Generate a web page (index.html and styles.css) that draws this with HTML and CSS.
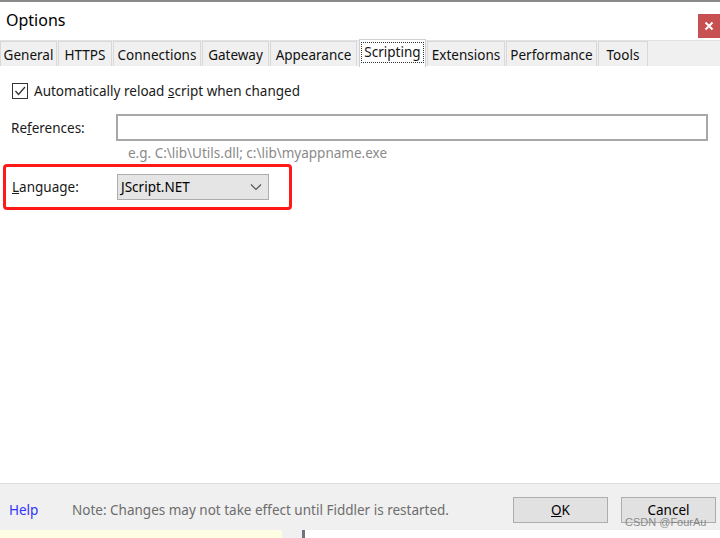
FILE: index.html
```html
<!DOCTYPE html>
<html>
<head>
<meta charset="utf-8">
<link rel="stylesheet" href="styles.css">
</head>
<body>
<div class="window">
  <div class="topline"></div>
  <div class="titlebar">
    <span class="title">Options</span>
    <span class="close">
      <svg width="10" height="10" viewBox="0 0 10 10"><path d="M1.5 1.5 L8.5 8.5 M8.5 1.5 L1.5 8.5" stroke="#fff" stroke-width="2"/></svg>
    </span>
  </div>
  <div class="tabs">
    <div class="tab" style="width:57px">General</div>
    <div class="tab" style="width:54px">HTTPS</div>
    <div class="tab" style="width:88px">Connections</div>
    <div class="tab" style="width:67px">Gateway</div>
    <div class="tab" style="width:87px">Appearance</div>
    <div class="tab active" style="width:67px"><span class="focus">Scripting</span></div>
    <div class="tab" style="width:78px">Extensions</div>
    <div class="tab" style="width:91px">Performance</div>
    <div class="tab" style="width:50px">Tools</div>
  </div>
  <div class="content">
    <div class="check-row">
      <span class="checkbox">
        <svg width="14" height="14" viewBox="0 0 14 14"><path d="M2.5 7 L5.5 10.5 L12 3" fill="none" stroke="#333" stroke-width="1.3"/></svg>
      </span>
      <span>Automatically reload <u>s</u>cript when changed</span>
    </div>
    <div class="ref-row">
      <span class="label">Re<u>f</u>erences:</span>
      <div class="input"></div>
    </div>
    <div class="hint">e.g. C:\lib\Utils.dll; c:\lib\myappname.exe</div>
    <div class="highlight">
      <span class="label"><u>L</u>anguage:</span>
      <div class="select">
        <span>JScript.NET</span>
        <svg width="12" height="8" viewBox="0 0 12 8"><path d="M1 1.5 L6 6.5 L11 1.5" fill="none" stroke="#555" stroke-width="1.2"/></svg>
      </div>
    </div>
  </div>
  <div class="footer">
    <span class="help">Help</span>
    <span class="note">Note: Changes may not take effect until Fiddler is restarted.</span>
    <div class="buttons">
      <div class="btn"><u>O</u>K</div>
      <div class="btn">Cancel</div>
    </div>
    <span class="watermark">CSDN @FourAu</span>
  </div>
  <div class="bottomstrip">
    <div class="yellow"></div>
    <div class="grey"></div>
    <div class="dark"></div>
    <div class="white"></div>
  </div>
</div>
</body>
</html>
```
FILE: styles.css
```css
* { box-sizing: border-box; }
html, body { margin: 0; padding: 0; }
body {
  width: 720px;
  height: 538px;
  overflow: hidden;
  font-family: "Noto Sans", "Open Sans", sans-serif;
  font-size: 13.5px;
  color: #1a1a1a;
  background: #fff;
}
.window {
  display: flex;
  flex-direction: column;
  height: 538px;
}
.topline {
  height: 2px;
  background: #8a8a8a;
}
.titlebar {
  height: 38px;
  display: flex;
  align-items: center;
  justify-content: space-between;
  background: #fff;
}
.title {
  font-size: 16px;
  padding-left: 6px;
  margin-top: -2px;
  color: #000;
}
.close {
  width: 22px;
  height: 24px;
  margin-top: 10px;
  background: #c75050;
  display: flex;
  align-items: center;
  justify-content: center;
}
.tabs {
  height: 26px;
  background: #f0f0f0;
  display: flex;
  align-items: flex-end;
  border-top: 1px solid #e3e3e3;
}
.tab {
  height: 25px;
  border: 1px solid #d9d9d9;
  border-bottom: none;
  margin-right: 1px;
  display: flex;
  align-items: center;
  justify-content: center;
  color: #111;
  background: #f0f0f0;
  white-space: nowrap;
  padding-top: 1px;
}
.tab.active {
  height: 28px;
  margin-top: -2px;
  background: #fff;
  border-color: #d0d0d0;
  margin-left: 1px;
  align-self: flex-end;
  position: relative;
  top: 1px;
  padding-top: 0;
}
.focus {
  border: 1px dotted #333;
  padding: 0 2px;
  line-height: 19px;
  margin-top: -3px;
}
.content {
  flex: 1;
  background: #fff;
  padding-top: 15px;
}
.check-row {
  display: flex;
  align-items: center;
  padding-left: 12px;
  height: 20px;
  gap: 6px;
}
.checkbox {
  width: 16px;
  height: 16px;
  border: 1px solid #333;
  background: #fff;
  display: flex;
  align-items: center;
  justify-content: center;
}
.ref-row {
  display: flex;
  align-items: center;
  margin-top: 13px;
  padding-left: 11px;
  height: 27px;
}
.label {
  width: 105px;
  color: #1a1a1a;
}
.input {
  width: 592px;
  height: 27px;
  border: 2px solid #a8a8a8;
  background: #fff;
}
.hint {
  padding-left: 128px;
  color: #8a8a8a;
  margin-top: 2px;
  height: 20px;
  line-height: 20px;
}
.highlight {
  width: 289px;
  height: 46px;
  margin-left: 3px;
  margin-top: 1px;
  border: 3px solid #ff1a1a;
  border-radius: 4px;
  display: flex;
  align-items: center;
  padding-left: 6px;
  padding-top: 0;
}
.highlight .label {
  width: 105px;
}
.select {
  width: 152px;
  height: 26px;
  background: #e5e5e5;
  border: 1px solid #adadad;
  display: flex;
  align-items: center;
  justify-content: space-between;
  padding: 0 6px 0 3px;
  color: #000;
}
.footer {
  height: 47px;
  background: #f0f0f0;
  border-top: 1px solid #dcdcdc;
  display: flex;
  align-items: center;
  position: relative;
  padding-top: 5px;
}
.help {
  color: #3232ff;
  padding-left: 9px;
  width: 72px;
}
.note {
  color: #6d6d6d;
  flex: 1;
  white-space: nowrap;
}
.buttons {
  display: flex;
  gap: 13px;
  padding-right: 4px;
}
.btn {
  width: 95px;
  height: 26px;
  border: 1px solid #adadad;
  background: #e1e1e1;
  display: flex;
  align-items: center;
  justify-content: center;
  color: #000;
}
.watermark {
  position: absolute;
  left: 625px;
  top: 32px;
  font-size: 11px;
  color: rgba(120,120,120,0.85);
  font-family: "Liberation Sans", sans-serif;
}
.bottomstrip {
  height: 8px;
  display: flex;
}
.yellow { width: 282px; background: #fdfde3; }
.grey { width: 20px; background: #f0f0f0; }
.dark { width: 3px; background: #6f7480; }
.white { flex: 1; background: #fff; }
```
